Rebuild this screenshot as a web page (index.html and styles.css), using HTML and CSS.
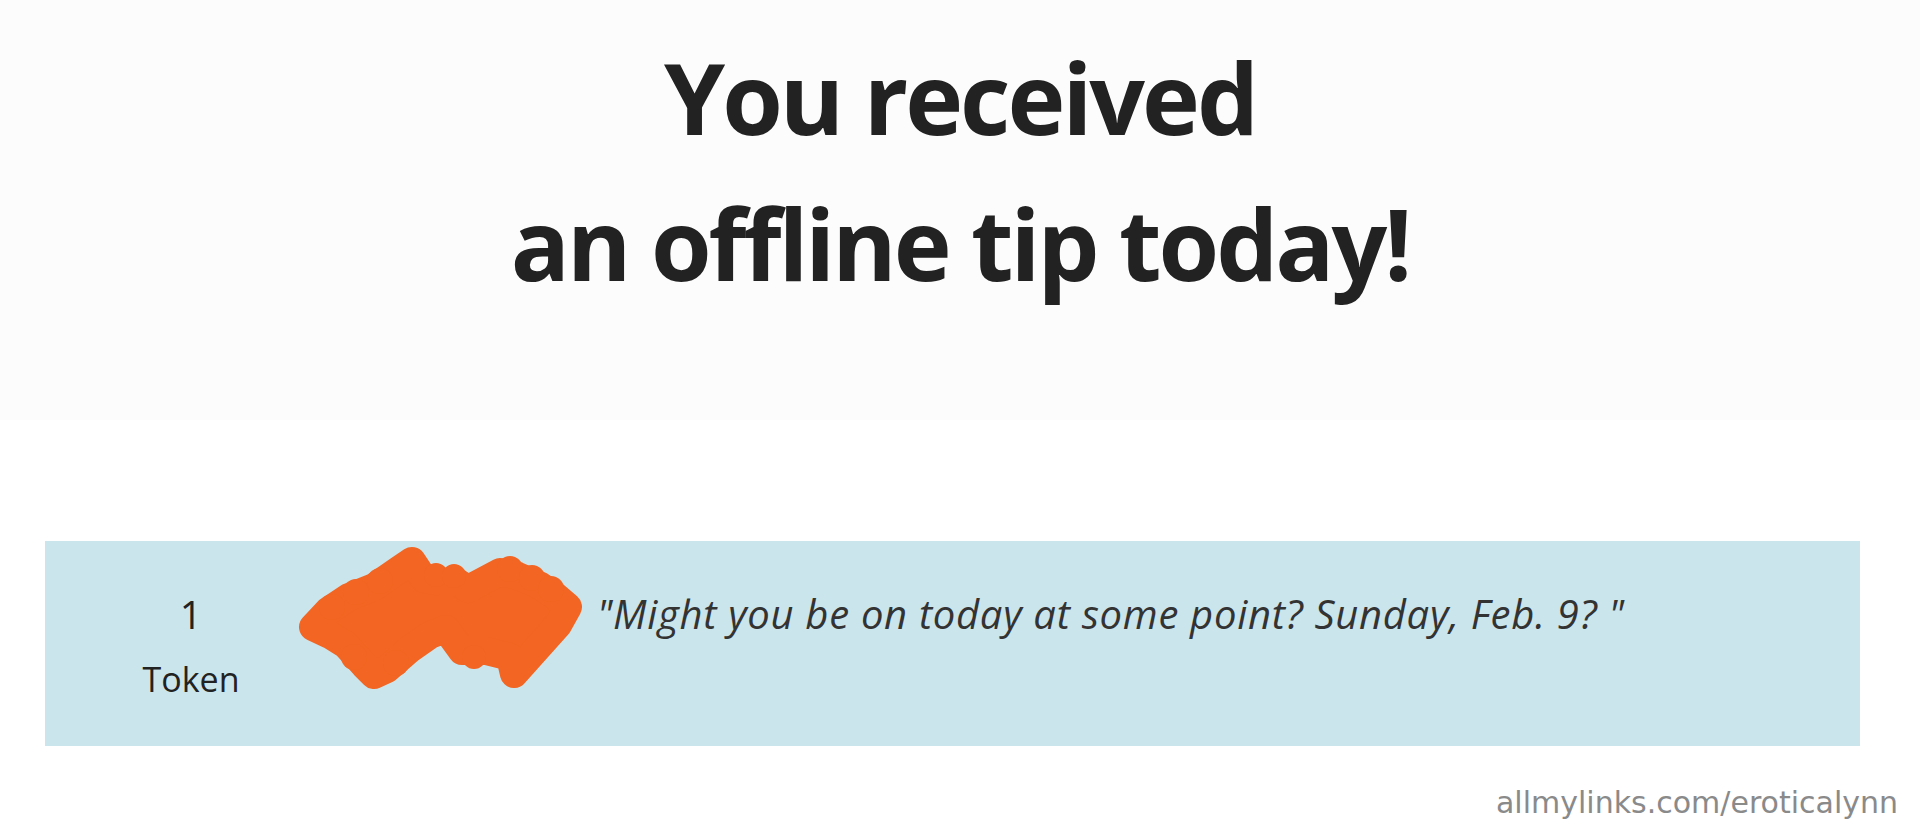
FILE: index.html
```html
<!DOCTYPE html>
<html lang="en">
<head>
<meta charset="utf-8">
<title>Offline tip</title>
<link rel="stylesheet" href="styles.css">
</head>
<body>
<header class="hero">
  <h1 class="hero-title">You received<br>an offline tip today!</h1>
</header>
<main class="content">
  <section class="tip-row">
    <div class="tip-amount">
      <span class="tip-count">1</span>
      <span class="tip-unit">Token</span>
    </div>
    <svg class="tip-scribble" width="292" height="150" viewBox="0 0 292 150" aria-hidden="true">
      <g fill="#f26522">
        <path d="M17 82 L32 66 L53 52 L78 42 L104 24 L116 16 L128 34 L144 37 L161 37 L172 44 L204 27 L222 31 L243 40 L258 50 L272 62 L262 80 L228 118 L218 129 L214 112 L190 106 L166 106 L150 84 L134 90 L114 104 L91 124 L78 130 L68 120 L50 100 L34 90 Z" stroke="#f26522" stroke-width="28" stroke-linejoin="round"/>
        <circle cx="36" cy="62" r="13"/>
        <circle cx="60" cy="47" r="13"/>
        <circle cx="84" cy="36" r="13"/>
        <circle cx="140" cy="30" r="12"/>
        <circle cx="158" cy="31" r="12"/>
        <circle cx="214" cy="24" r="13"/>
        <circle cx="236" cy="33" r="13"/>
        <circle cx="255" cy="44" r="13"/>
        <circle cx="100" cy="118" r="13"/>
        <circle cx="58" cy="112" r="13"/>
        <circle cx="178" cy="112" r="12"/>
      </g>
    </svg>
    <p class="tip-message">"Might you be on today at some point? Sunday, Feb. 9? "</p>
  </section>
</main>
<footer class="watermark">allmylinks.com/eroticalynn</footer>
</body>
</html>
```

FILE: styles.css
```css
html, body {
  margin: 0;
  padding: 0;
  background: #ffffff;
}

body {
  width: 1920px;
  height: 838px;
  overflow: hidden;
  font-family: "Open Sans", "Noto Sans", sans-serif;
  color: #222222;
}

.hero {
  height: 420px;
  box-sizing: border-box;
  padding-top: 24px;
  background: #fcfcfc;
  text-align: center;
}

.hero-title {
  margin: 0;
  font-family: "Open Sans", "Noto Sans", sans-serif;
  font-weight: 700;
  font-size: 98px;
  line-height: 146px;
  letter-spacing: -3px;
  color: #222222;
}

.content {
  padding: 121px 60px 0 45px;
}

.tip-row {
  display: flex;
  align-items: flex-start;
  height: 205px;
  box-sizing: border-box;
  padding: 4px 0 0 71px;
  background: #cbe5ec;
}

.tip-amount {
  width: 150px;
  margin-top: 34px;
  display: flex;
  flex-direction: column;
  align-items: center;
  font-size: 34px;
  line-height: 61px;
  color: #222222;
}

.tip-count {
  font-size: 39px;
  line-height: 70px;
}

.tip-scribble {
  display: block;
  margin-left: 30px;
  flex: none;
}

.tip-message {
  margin: 38px 0 0 9px;
  font-style: italic;
  font-weight: 400;
  font-size: 40px;
  line-height: 61px;
  letter-spacing: 0.7px;
  color: #333333;
}

.watermark {
  margin-top: 39px;
  padding-right: 22px;
  text-align: right;
  font-family: "DejaVu Sans", sans-serif;
  font-size: 30px;
  color: #8a8a8a;
}
```
